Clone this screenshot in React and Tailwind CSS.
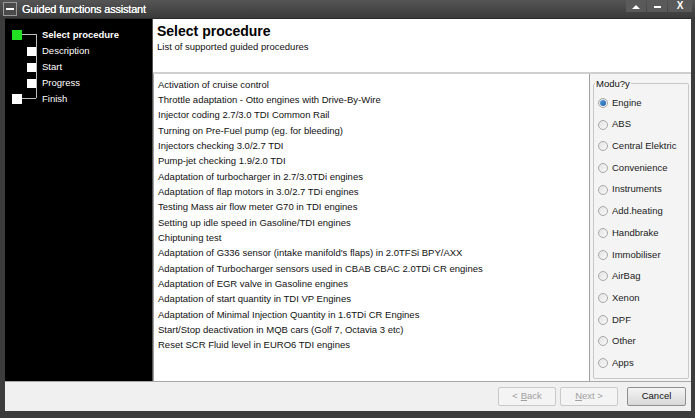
import React from 'react';

const steps = [
  { label: 'Select procedure', active: true, indent: false },
  { label: 'Description', indent: true },
  { label: 'Start', indent: true },
  { label: 'Progress', indent: true },
  { label: 'Finish', indent: false },
];

const procedures = [
  'Activation of cruise control',
  'Throttle adaptation - Otto engines with Drive-By-Wire',
  'Injector coding 2.7/3.0 TDI Common Rail',
  'Turning on Pre-Fuel pump (eg. for bleeding)',
  'Injectors checking 3.0/2.7 TDI',
  'Pump-jet checking 1.9/2.0 TDI',
  'Adaptation of turbocharger in 2.7/3.0TDi engines',
  'Adaptation of flap motors in 3.0/2.7 TDi engines',
  'Testing Mass air flow meter G70 in TDI engines',
  'Setting up idle speed in Gasoline/TDI engines',
  'Chiptuning test',
  "Adaptation of G336 sensor (intake manifold's flaps) in 2.0TFSi BPY/AXX",
  'Adaptation of Turbocharger sensors used in CBAB CBAC 2.0TDi CR engines',
  'Adaptation of EGR valve in Gasoline engines',
  'Adaptation of start quantity in TDI VP Engines',
  'Adaptation of Minimal Injection Quantity in 1.6TDi CR Engines',
  'Start/Stop deactivation in MQB cars (Golf 7, Octavia 3 etc)',
  'Reset SCR Fluid level in EURO6 TDI engines',
];

const modules = [
  'Engine', 'ABS', 'Central Elektric', 'Convenience', 'Instruments', 'Add.heating',
  'Handbrake', 'Immobiliser', 'AirBag', 'Xenon', 'DPF', 'Other', 'Apps',
];

const font = { fontFamily: '"Liberation Sans", Arial, sans-serif' };

const Radio = ({ checked, label }) => (
  <div className="flex items-center h-[21.7px] gap-[4px]">
    <span className="w-[10px] h-[10px] rounded-full border border-[#a8a8a8] bg-gradient-to-br from-[#e4e4e4] to-[#f8f8f8] flex items-center justify-center">
      {checked && <span className="w-[6px] h-[6px] rounded-full bg-gradient-to-br from-[#5aa0e0] to-[#1a5fa8]" />}
    </span>
    <span className="text-[9.5px] text-[#1a1a1a]">{label}</span>
  </div>
);

export default function App() {
  return (
    <div className="w-[695px] h-[418px] bg-[#3c3c3c] flex flex-col overflow-hidden" style={font}>
      {/* title bar */}
      <div className="h-[18px] flex items-center bg-gradient-to-b from-[#555555] to-[#3a3a3a] relative">
        <div className="ml-[3px] w-[14px] h-[14px] border border-[#9a9a9a] bg-[#4a4a4a] flex items-center justify-center">
          <span className="w-[8px] h-[2px] bg-white" />
        </div>
        <span className="ml-[5px] text-white text-[11px] tracking-[-0.2px] [text-shadow:0_0_0.6px_#fff]">Guided functions assistant</span>
        <div className="absolute right-[3px] top-0 flex gap-[1px]">
          <div className="w-[20px] h-[12px] bg-[#5a5a5a] flex items-end justify-center pb-[3px]">
            <span className="w-0 h-0 border-l-[4px] border-r-[4px] border-b-[4px] border-l-transparent border-r-transparent border-b-white" />
          </div>
          <div className="w-[20px] h-[12px] bg-[#5a5a5a] flex items-center justify-center">
            <span className="w-[7px] h-[2px] bg-white mt-[1px]" />
          </div>
          <div className="w-[24px] h-[12px] bg-[#5a5a5a] flex items-center justify-center text-white font-bold text-[10px] leading-none">X</div>
        </div>
      </div>

      <div className="flex-1 flex flex-col ml-[5px] mr-[4px] mb-[7px] border-t border-[#2a2a2a]">
        <div className="flex flex-1 min-h-0">
          {/* steps panel */}
          <div className="w-[148px] bg-black border-r border-[#555] relative">
            <div className="absolute left-[31px] top-[15px] w-[1px] h-[64px] bg-[#bdbdbd]" />
            <div className="absolute left-[17px] top-[15px] w-[14px] h-[1px] bg-[#bdbdbd]" />
            <div className="absolute left-[17px] top-[79px] w-[14px] h-[1px] bg-[#bdbdbd]" />
            <div className="flex flex-col pt-[8px]">
              {steps.map((s) => (
                <div key={s.label} className="h-[16px] flex items-center relative">
                  <span
                    className={
                      s.indent
                        ? 'absolute left-[22px] w-[9px] h-[9px] bg-white'
                        : s.active
                        ? 'absolute left-[7px] w-[10px] h-[10px] bg-[#22e022]'
                        : 'absolute left-[7px] w-[10px] h-[10px] bg-white'
                    }
                  />
                  <span className={`ml-[37px] text-white text-[9.5px] ${s.active ? 'font-bold' : ''}`}>{s.label}</span>
                </div>
              ))}
            </div>
          </div>

          {/* right side */}
          <div className="flex-1 flex flex-col bg-[#f4f4f4]">
            <div className="h-[55px] bg-white border-b-2 border-[#cfcfcf] px-[4px] pt-[2px]">
              <div className="text-[14px] font-bold text-black leading-[20px]">Select procedure</div>
              <div className="text-[9.5px] text-[#111] leading-[12px]">List of supported guided procedures</div>
            </div>
            <div className="flex flex-1 min-h-0">
              <div className="w-[437px] bg-white border-l border-r border-[#a0a0a0] pt-[3px] px-[4px]">
                {procedures.map((p) => (
                  <div key={p} className="h-[15.35px] flex items-center text-[9.5px] text-[#111] whitespace-nowrap">
                    {p}
                  </div>
                ))}
              </div>
              <div className="flex-1 pl-[3px] pr-[2px] pt-[9px] pb-[2px]">
                <div className="h-full border border-[#c8c8c8] rounded-[2px] relative pl-[4px] pt-[8px]">
                  <span className="absolute -top-[7px] left-[1px] bg-[#f4f4f4] px-[1px] text-[9.5px] text-[#111]">Modu?y</span>
                  {modules.map((m, i) => (
                    <Radio key={m} label={m} checked={i === 0} />
                  ))}
                </div>
              </div>
            </div>
          </div>
        </div>

        {/* bottom bar */}
        <div className="h-[30px] bg-[#f0f0f0] border-t border-[#a8a8a8] flex items-center justify-end gap-[4px] pr-[5px]">
          <div className="w-[58px] h-[19px] border border-[#c9c9c9] rounded-[2px] bg-[#f4f4f4] flex items-center justify-center text-[9.5px] text-[#a0a0a0]">
            &lt; <span className="underline ml-[3px]">B</span>ack
          </div>
          <div className="w-[58px] h-[19px] border border-[#c9c9c9] rounded-[2px] bg-[#f4f4f4] flex items-center justify-center text-[9.5px] text-[#a0a0a0]">
            <span className="underline">N</span>ext &gt;
          </div>
          <div className="ml-[5px] w-[59px] h-[19px] border border-[#8e8e8e] rounded-[2px] bg-gradient-to-b from-[#f4f4f4] to-[#d8d8d8] flex items-center justify-center text-[9.5px] text-[#111]">
            Cancel
          </div>
        </div>
      </div>
    </div>
  );
}
